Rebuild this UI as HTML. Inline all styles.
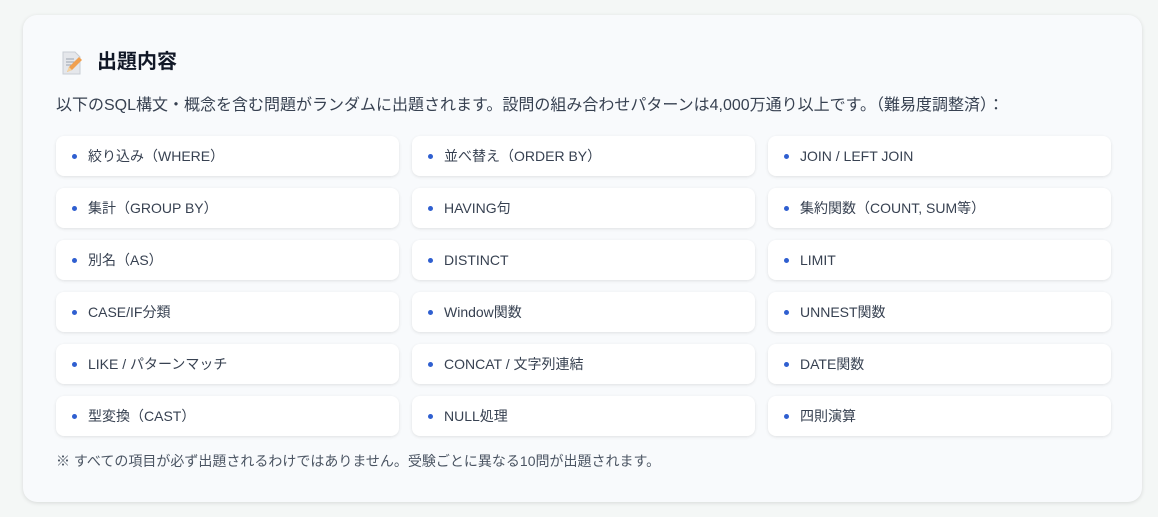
<!DOCTYPE html>
<html><head><meta charset="utf-8"><style>
body{margin:0;width:1158px;height:517px;background:#f4f7f6;font-family:"Liberation Sans","Noto Sans CJK JP",sans-serif;overflow:hidden}
.card{position:absolute;left:23px;top:15px;width:1119px;height:487px;background:#f8fafc;border-radius:14px;box-shadow:0 1px 4px rgba(0,0,0,.12)}
h2{position:absolute;left:74px;top:33px;margin:0;font-size:20px;font-weight:bold;color:#111827;line-height:28px}
.ic{position:absolute;left:38px;top:35px}
.intro{position:absolute;left:33px;top:80px;font-size:16px;color:#374151;line-height:22px;margin:0}
.grid{position:absolute;left:33px;top:121px;display:grid;grid-template-columns:343px 343px 343px;column-gap:13px;row-gap:12px}
.it{height:40px;background:#fff;border-radius:8px;box-shadow:0 1px 3px rgba(0,0,0,.1);display:flex;align-items:center;font-size:14px;color:#374151}
.it:before{content:"";width:5px;height:5px;border-radius:50%;background:#2f5fd0;margin:0 11px 0 16px}
.note{position:absolute;left:33px;top:436px;font-size:14px;color:#4b5563;margin:0;line-height:20px}
</style></head><body><div class="card">
<svg class="ic" width="22" height="26" viewBox="0 0 22 26"><path d="M2 2h12l5 5v17H2z" fill="#e5e7eb" stroke="#c9cdd4"/><path d="M5 9h8M5 12h9M5 15h6" stroke="#9ca3af"/><path d="M6 22l2-5 10-10 3 3-10 10z" fill="#f0a050"/><path d="M6 22l2-5 3 3z" fill="#f4d3a0"/></svg>
<h2>出題内容</h2>
<p class="intro">以下のSQL構文・概念を含む問題がランダムに出題されます。設問の組み合わせパターンは4,000万通り以上です。（難易度調整済）：</p>
<div class="grid">
<div class="it">絞り込み（WHERE）</div><div class="it">並べ替え（ORDER BY）</div><div class="it">JOIN / LEFT JOIN</div>
<div class="it">集計（GROUP BY）</div><div class="it">HAVING句</div><div class="it">集約関数（COUNT, SUM等）</div>
<div class="it">別名（AS）</div><div class="it">DISTINCT</div><div class="it">LIMIT</div>
<div class="it">CASE/IF分類</div><div class="it">Window関数</div><div class="it">UNNEST関数</div>
<div class="it">LIKE / パターンマッチ</div><div class="it">CONCAT / 文字列連結</div><div class="it">DATE関数</div>
<div class="it">型変換（CAST）</div><div class="it">NULL処理</div><div class="it">四則演算</div>
</div>
<p class="note">※ すべての項目が必ず出題されるわけではありません。受験ごとに異なる10問が出題されます。</p>
</div></body></html>
